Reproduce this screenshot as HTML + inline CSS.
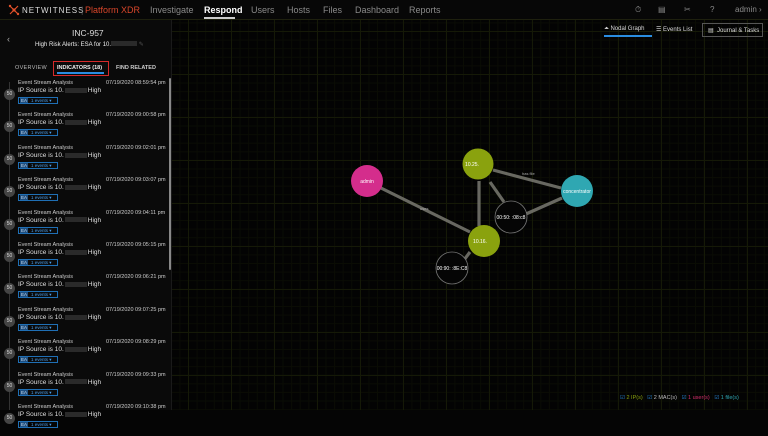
<!DOCTYPE html>
<html><head><meta charset="utf-8"><style>
*{margin:0;padding:0;box-sizing:border-box}
body{width:768px;height:410px;overflow:hidden;background:#050505;font-family:"Liberation Sans",sans-serif;color:#ddd;position:relative}
#top{position:absolute;left:0;top:0;width:768px;height:20px;background:#070707;border-bottom:1px solid #1e200e}
.nav{position:absolute;top:5px;font-size:9px;color:#8a8a8a}
#graph{position:absolute;left:172px;top:20px;width:596px;height:390px;
background-color:#030303;
background-image:linear-gradient(#151907 1px,transparent 1px),linear-gradient(90deg,#151907 1px,transparent 1px),linear-gradient(#0a0c04 1px,transparent 1px),linear-gradient(90deg,#0a0c04 1px,transparent 1px);
background-size:43px 43px,43px 43px,8.6px 8.6px,8.6px 8.6px;background-position:16px 11px,16px 11px,16px 11px,16px 11px}
#panel{position:absolute;left:0;top:20px;width:172px;height:390px;background:#0a0a0a;border-right:1px solid #1a1a1a}
.item{position:absolute;left:0;width:168px;height:32px;font-size:5.5px;color:#ccc}
.item .t{position:absolute;left:18px;top:0}
.item .d{position:absolute;left:106px;top:0}
.item .s{position:absolute;left:18px;top:7px;font-size:6.5px;color:#ddd}
.item .bl{display:inline-block;width:22px;height:5px;background:#2a2a2a;vertical-align:middle;margin:0 1px}
.item .b{position:absolute;left:4px;top:9px;width:11px;height:11px;border-radius:50%;background:#444;color:#ddd;font-size:5px;text-align:center;line-height:11px}
.item .e{position:absolute;left:18px;top:17px;width:40px;height:7px;border:1px solid #1f6fb5;font-size:4.5px;color:#4a9ce8;line-height:5px;padding-left:1px}
.item .e i{font-style:normal;background:#1f4f80;color:#cde;padding:0 1px;margin-right:3px}
</style></head><body>
<div id="graph"></div>
<div id="top">
<svg style="position:absolute;left:8px;top:4px" width="12" height="12" viewBox="0 0 12 12"><g stroke="#e2512b" stroke-width="1.2"><path d="M2 2L6 6L10 2M6 6L2 10M6 6L10 10"/></g><circle cx="6" cy="6" r="1.6" fill="#e2512b"/><circle cx="2" cy="2" r="1.2" fill="#e2512b"/><circle cx="10" cy="10" r="1.2" fill="#e2512b"/></svg>
<span class="nav" style="left:22px;color:#ddd;letter-spacing:1px;font-size:8px;top:6px">NETWITNESS</span>
<span class="nav" style="left:81px;color:#555;top:5px">|</span>
<span class="nav" style="left:85px;color:#d8462a">Platform XDR</span>
<span class="nav" style="left:150px">Investigate</span>
<span class="nav" style="left:204px;color:#fff;font-weight:bold">Respond</span>
<div style="position:absolute;left:204px;top:17px;width:31px;height:2px;background:#ccc"></div>
<span class="nav" style="left:251px">Users</span>
<span class="nav" style="left:287px">Hosts</span>
<span class="nav" style="left:323px">Files</span>
<span class="nav" style="left:355px">Dashboard</span>
<span class="nav" style="left:409px">Reports</span>
<span class="nav" style="left:635px;font-size:8px">⏱</span>
<span class="nav" style="left:658px;font-size:8px">▤</span>
<span class="nav" style="left:684px;font-size:8px">✂</span>
<span class="nav" style="left:710px;font-size:8px">?</span>
<span class="nav" style="left:735px;font-size:8px">admin ›</span>
</div>
<div style="position:absolute;left:604px;top:26px;font-size:6px;color:#ddd">⏶ Nodal Graph</div>
<div style="position:absolute;left:604px;top:35px;width:48px;height:1.5px;background:#2a8de0"></div>
<div style="position:absolute;left:656px;top:26px;font-size:6px;color:#ddd">☰ Events List</div>
<div style="position:absolute;left:702px;top:23px;width:61px;height:14px;border:1px solid #555;font-size:6px;color:#ddd;padding:3px 0 0 5px">▤ &nbsp;Journal &amp; Tasks</div>
<div id="panel">
<div style="position:absolute;left:7px;top:14px;font-size:9px;color:#aaa">‹</div>
<div style="position:absolute;left:72px;top:8px;font-size:8.5px;color:#ddd">INC-957</div>
<div style="position:absolute;left:35px;top:21px;font-size:6px;color:#eee">High Risk Alerts: ESA for 10.<span style="display:inline-block;width:26px;height:5px;background:#2a2a2a"></span> <span style="color:#555">✎</span></div>
<div style="position:absolute;left:15px;top:45px;font-size:5.5px;color:#bbb;letter-spacing:.3px">OVERVIEW</div>
<div style="position:absolute;left:53px;top:41px;width:56px;height:15px;border:1px solid #d62a2a"></div>
<div style="position:absolute;left:57px;top:45px;font-size:5.5px;color:#eee;font-weight:bold">INDICATORS (18)</div>
<div style="position:absolute;left:57px;top:52px;width:47px;height:1.5px;background:#2a8de0"></div>
<div style="position:absolute;left:116px;top:45px;font-size:5.5px;color:#ccc;font-weight:bold">FIND RELATED</div>
<div style="position:absolute;left:9px;top:62px;width:1px;height:328px;background:#333"></div>
<div style="position:absolute;left:169px;top:58px;width:2px;height:192px;background:#888;border-radius:1px"></div>
<div id="items"></div>
</div>
<script>
var ts=["08:59:54","09:00:58","09:02:01","09:03:07","09:04:11","09:05:15","09:06:21","09:07:25","09:08:29","09:09:33","09:10:38"];
var h="";for(var i=0;i<11;i++){h+='<div class="item" style="top:'+(60+i*32.4)+'px"><div class="t">Event Stream Analysis</div><div class="d">07/19/2020 '+ts[i]+' pm</div><div class="b">50</div><div class="s">IP Source is 10.<span class="bl"></span>High</div><div class="e"><i>EA</i>1 events ▾</div></div>';}
document.getElementById("items").innerHTML=h;
</script>
<svg style="position:absolute;left:0;top:0" width="768" height="410">
<g stroke="#7a7a72" stroke-width="3.2" opacity=".85">
<line x1="381" y1="188" x2="470" y2="232"/>
<line x1="493" y1="170" x2="561" y2="188"/>
<line x1="479" y1="226" x2="479" y2="181"/>
<line x1="504" y1="202" x2="490" y2="182"/>
<line x1="526" y1="214" x2="562" y2="198"/>
<line x1="464" y1="260" x2="470" y2="252"/>
</g>
<g fill="#aaa" font-size="4" font-family="Liberation Sans">
<text x="420" y="210">uses</text><text x="522" y="175">has file</text>
</g>
<circle cx="367" cy="181" r="16" fill="#d42d8c"/>
<circle cx="478" cy="164" r="15.5" fill="#8aa20e"/>
<circle cx="577" cy="191" r="16" fill="#2fa7b2"/>
<circle cx="484" cy="241" r="16" fill="#8aa20e"/>
<circle cx="511" cy="217" r="16" fill="#050505" stroke="#777" stroke-width=".8"/>
<circle cx="452" cy="268" r="16" fill="#050505" stroke="#777" stroke-width=".8"/>
<g fill="#fff" font-size="5" font-family="Liberation Sans" text-anchor="middle">
<text x="367" y="183">admin</text><text x="472" y="166">10.25.</text><text x="577" y="193">concentrator</text>
<text x="480" y="243">10.16.</text><text x="511" y="219">00:50:   :08:c8</text><text x="452" y="270">00:90:   :8E:C8</text>
</g>
</svg>
<div style="position:absolute;left:620px;top:395px;font-size:5.5px;white-space:nowrap"><span style="color:#2a8de0">☑</span> <span style="color:#8aa20e">2 IP(s)</span> &nbsp;&nbsp;<span style="color:#2a8de0">☑</span> <span style="color:#bbb">2 MAC(s)</span> &nbsp;&nbsp;<span style="color:#2a8de0">☑</span> <span style="color:#d42d6c">1 user(s)</span> &nbsp;&nbsp;<span style="color:#2a8de0">☑</span> <span style="color:#2fa7b2">1 file(s)</span></div>
</body></html>
